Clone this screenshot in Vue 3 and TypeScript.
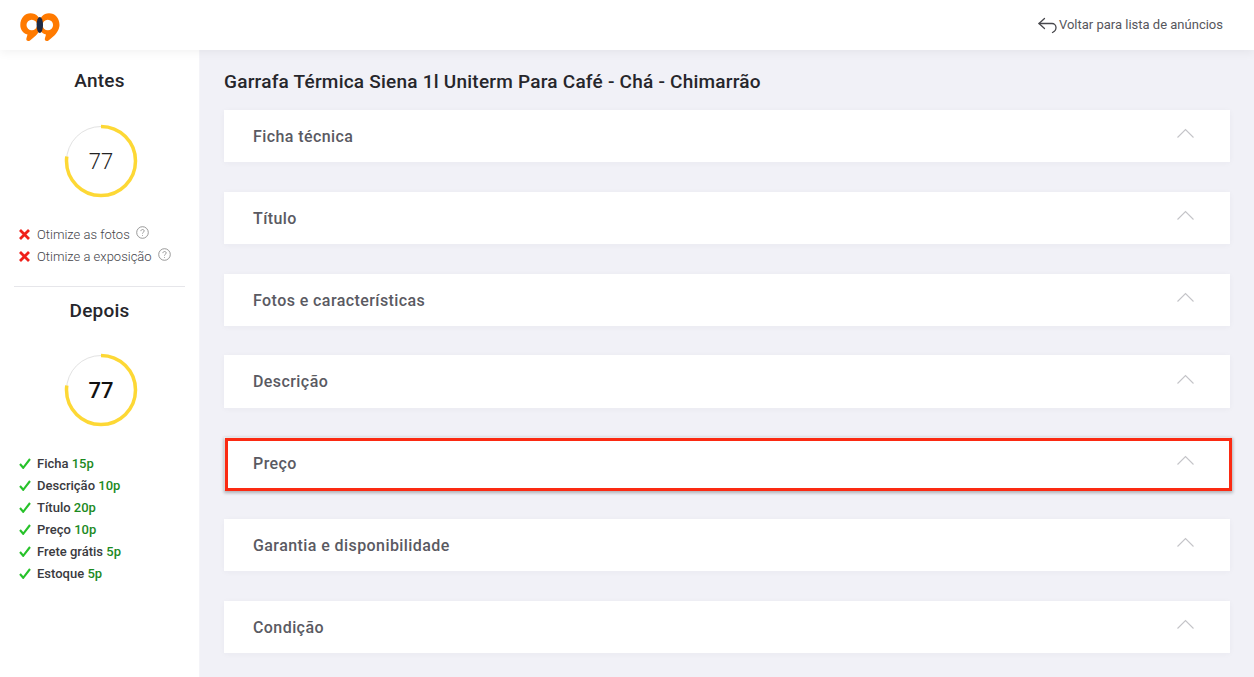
<template>
  <div class="page">
    <header class="topbar">
      <svg class="logo" viewBox="0 0 40 30" width="40" height="30">
        <path d="M10.500.3C16.500.3 21 5 21 12c0 5-4 10-8 13l-3 2.500c-2 1.500-4.500 0-3.500-2.500l1-3.500C3 20.500.3 16.500.3 12 .3 5 5 .3 10.500.3Z" fill="#ff7a00" />
        <path d="M10.500.3C16.500.3 21 5 21 12c0 5-4 10-8 13l-3 2.500c-2 1.500-4.500 0-3.500-2.500l1-3.500C3 20.500.3 16.500.3 12 .3 5 5 .3 10.500.3Z" fill="#ff7a00" transform="translate(18.500 0)" />
        <circle cx="11.800" cy="12" r="5.300" fill="#fff" />
        <circle cx="27.800" cy="12" r="5.300" fill="#fff" />
        <ellipse cx="19.800" cy="12" rx="3.200" ry="8" fill="#1f2a44" />
      </svg>
      <a class="back">
        <svg viewBox="0 0 20 17" width="20" height="17" fill="none" stroke="#47474c" stroke-width="1.300" stroke-linecap="round" stroke-linejoin="round">
          <path d="M6.500 1.500 1 6.500l5.500 5" />
          <path d="M1 6.500h13a4 4 0 0 1 4 4c0 2.200-1.200 4-3.500 5" />
        </svg>
        <span>Voltar para lista de anúncios</span>
      </a>
    </header>

    <div class="body">
      <aside class="side">
        <section class="score">
          <h2>Antes</h2>
          <div class="ring">
            <svg viewBox="0 0 74 74" width="74" height="74">
              <circle cx="37" cy="37" r="34.500" fill="none" stroke="#e2e2e2" stroke-width="1" />
              <circle cx="37" cy="37" r="34.500" fill="none" stroke="#fdd835" stroke-width="3.500" :stroke-dasharray="dash" transform="rotate(-90 37 37)" />
            </svg>
            <span class="ring-value">77</span>
          </div>
          <ul class="todo">
            <li v-for="t in todos" :key="t">
              <svg viewBox="0 0 11 11" width="11" height="11" stroke="#f0201a" stroke-width="2.800" fill="none"><path d="M1 1l9 9M10 1 1 10" /></svg>
              <span>{{ t }}</span>
              <svg class="help" viewBox="0 0 13 13" width="13" height="13" fill="none" stroke="#8d8d8d" stroke-width=".9">
                <circle cx="6.500" cy="6.500" r="5.800" />
                <path d="M4.900 5.100c0-2.100 3.300-2.100 3.300-.1 0 1.200-1.700 1.200-1.700 2.600M6.500 9v.8" />
              </svg>
            </li>
          </ul>
        </section>
        <hr />
        <section class="score after">
          <h2>Depois</h2>
          <div class="ring">
            <svg viewBox="0 0 74 74" width="74" height="74">
              <circle cx="37" cy="37" r="34.500" fill="none" stroke="#e2e2e2" stroke-width="1" />
              <circle cx="37" cy="37" r="34.500" fill="none" stroke="#fdd835" stroke-width="3.500" :stroke-dasharray="dash" transform="rotate(-90 37 37)" />
            </svg>
            <span class="ring-value strong">77</span>
          </div>
          <ul class="done">
            <li v-for="d in dones" :key="d.label">
              <svg viewBox="0 0 12 11" width="12" height="11" fill="none" stroke="#27c22a" stroke-width="2.100"><path d="M1 6l3.200 3.800L11 1" /></svg>
              <span>{{ d.label }} <b>{{ d.points }}</b></span>
            </li>
          </ul>
        </section>
      </aside>

      <main class="content">
        <h1>Garrafa Térmica Siena 1l Uniterm Para Café - Chá - Chimarrão</h1>
        <div class="cards">
          <div v-for="s in sections" :key="s" class="card" :class="{ active: s === 'Preço' }">
            <span>{{ s }}</span>
            <svg viewBox="0 0 17 10" width="17" height="10" fill="none" stroke="#c4c4c8" stroke-width="1.100"><path d="M.5 9.500 8.500 1.500l8 8" /></svg>
          </div>
        </div>
      </main>
    </div>
  </div>
</template>

<script setup lang="ts">
const circumference = 2 * Math.PI * 34.5
const dash = `${circumference * 0.77} ${circumference}`

const todos = ['Otimize as fotos', 'Otimize a exposição']
const dones = [
  { label: 'Ficha', points: '15p' },
  { label: 'Descrição', points: '10p' },
  { label: 'Título', points: '20p' },
  { label: 'Preço', points: '10p' },
  { label: 'Frete grátis', points: '5p' },
  { label: 'Estoque', points: '5p' }
]
const sections = [
  'Ficha técnica',
  'Título',
  'Fotos e características',
  'Descrição',
  'Preço',
  'Garantia e disponibilidade',
  'Condição'
]
</script>

<style>
html,
body {
  margin: 0;
  background: #f1f1f7;
  overflow: hidden;
}
</style>

<style scoped>
.page {
  width: 1254px;
  height: 677px;
  overflow: hidden;
  display: flex;
  flex-direction: column;
  font-family: Roboto, "Liberation Sans", sans-serif;
  background: #f1f1f7;
}

.topbar {
  position: relative;
  z-index: 2;
  height: 50px;
  flex-shrink: 0;
  display: flex;
  align-items: center;
  justify-content: space-between;
  padding: 0 31px 0 20px;
  background: #fff;
  box-shadow: 0 2px 10px rgba(0, 0, 0, 0.06);
}

.logo {
  margin-top: 5px;
}

.back {
  display: flex;
  align-items: center;
  gap: 1px;
  font-size: 13px;
  color: #56565c;
  padding-bottom: 1px;
}

.back svg {
  margin-top: 2px;
}

.body {
  flex: 1;
  display: flex;
  min-height: 0;
}

.side {
  width: 200px;
  flex-shrink: 0;
  box-sizing: border-box;
  padding: 20px 14px 0 14px;
  background: #fff;
  border-right: 1px solid #f4f4f8;
}

.score h2 {
  margin: 0;
  font-size: 19px;
  line-height: 22px;
  font-weight: 500;
  letter-spacing: 0.2px;
  color: #26262b;
  text-align: center;
}

.ring {
  position: relative;
  width: 74px;
  height: 74px;
  margin: 32px 0 0 50px;
}

.after .ring {
  margin-top: 31px;
}

.ring svg {
  display: block;
}

.ring-value {
  position: absolute;
  inset: 0;
  display: flex;
  align-items: center;
  justify-content: center;
  font-size: 22px;
  font-weight: 300;
  color: #222;
}

.ring-value.strong {
  font-weight: 500;
  color: #111;
}

ul {
  list-style: none;
  margin: 0;
  padding: 0 0 0 5px;
}

li {
  display: flex;
  align-items: center;
  height: 22px;
  font-size: 13px;
  white-space: nowrap;
}

.todo {
  margin-top: 25px;
}

.todo li {
  gap: 7px;
  font-weight: 300;
  color: #44444a;
}

.todo .help {
  margin: -3px 0 0 -1px;
}

.done {
  margin-top: 25px;
}

.done li {
  gap: 6px;
  font-weight: 500;
  color: #3a3a40;
}

.done b {
  font-weight: 500;
  color: #1c8a1f;
}

hr {
  margin: 19px 0 13px;
  border: 0;
  border-top: 1px solid #e6e6ea;
}

.content {
  flex: 1;
  padding: 20px 24px 0 24px;
  min-width: 0;
}

h1 {
  margin: 0;
  font-size: 19px;
  line-height: 24px;
  font-weight: 500;
  letter-spacing: 0.23px;
  color: #26262b;
}

.cards {
  margin-top: 16px;
  display: flex;
  flex-direction: column;
  gap: 29.400px;
}

.card {
  position: relative;
  height: 52.400px;
  box-sizing: border-box;
  display: flex;
  align-items: center;
  justify-content: space-between;
  padding: 0 36px 6px 29px;
  background: #fff;
  box-shadow: 0 1px 6px rgba(40, 40, 70, 0.04);
  font-size: 16px;
  font-weight: 500;
  letter-spacing: 0.42px;
  color: #5a5a62;
}

.card span {
  padding-top: 6.800px;
}

.card.active::after {
  content: "";
  position: absolute;
  top: 1px;
  left: 1px;
  right: -2px;
  bottom: -1px;
  border: 3px solid #fb2a12;
  box-shadow: 0 1px 3px 1px rgba(0, 0, 0, 0.25);
}
</style>
